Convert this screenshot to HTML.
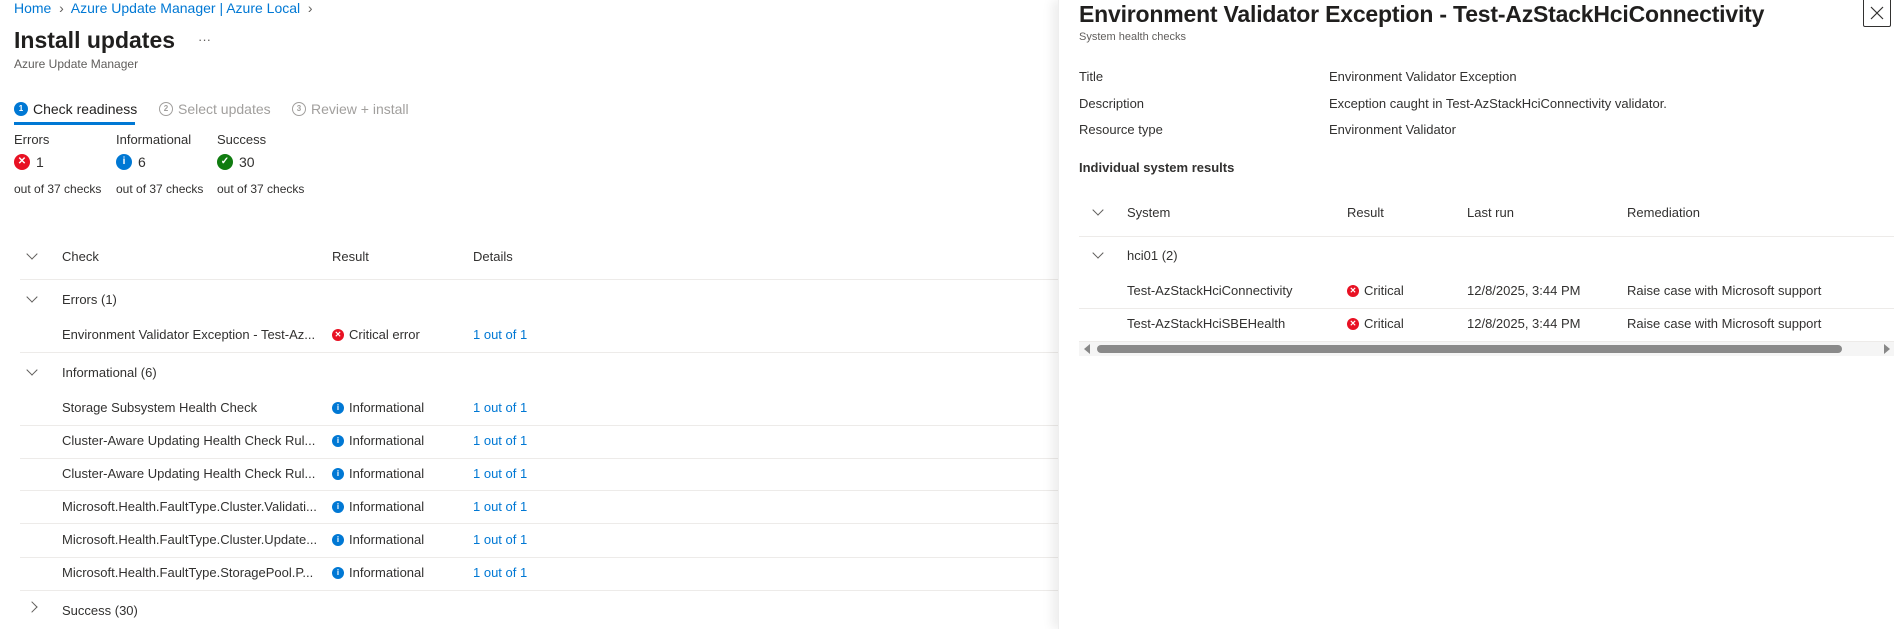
<!DOCTYPE html>
<html><head><meta charset="utf-8"><style>
*{margin:0;padding:0;box-sizing:border-box}
body{width:1894px;height:629px;overflow:hidden;background:#fff;font-family:"Liberation Sans",sans-serif;color:#323130;font-size:13px;position:relative}
.a{position:absolute;white-space:nowrap;line-height:16px;display:flex;align-items:center}
.l{color:#0078d4}
.line{position:absolute;height:1px;background:#edebe9}
.chev{position:absolute;width:8px;height:8px;border-right:1.2px solid #605e5c;border-bottom:1.2px solid #605e5c;transform:rotate(45deg)}
.ic{display:inline-block;flex:none;width:12px;height:12px;border-radius:50%;margin-right:5px;color:#fff;font-size:8px;line-height:12px;text-align:center;font-weight:bold}
.err{background:#e81123}.inf{background:#0078d4}.ok{background:#107c10}
.big{width:16px;height:16px;line-height:16px;font-size:10px;margin-right:6px}
.b{font-weight:bold}
</style></head><body>
<div class="a l" style="left:14px;top:0;font-size:14px">Home &nbsp;<span style="color:#605e5c">›</span>&nbsp; Azure Update Manager | Azure Local &nbsp;<span style="color:#605e5c">›</span></div>
<div class="a" style="left:14px;top:26px;font-size:23px;line-height:28px;font-weight:600;color:#201f1e">Install updates</div>
<div class="a" style="left:198px;top:32px;color:#605e5c">···</div>
<div class="a" style="left:14px;top:56px;font-size:12px;color:#605e5c">Azure Update Manager</div>
<div class="a" style="left:14px;top:101px;font-size:14px;color:#201f1e"><span class="ic inf" style="width:14px;height:14px;line-height:14px">1</span>Check readiness</div>
<div class="a" style="left:159px;top:101px;font-size:14px;color:#a19f9d"><span class="ic" style="border:1px solid #a19f9d;color:#a19f9d;width:14px;height:14px;line-height:12px">2</span>Select updates</div>
<div class="a" style="left:292px;top:101px;font-size:14px;color:#a19f9d"><span class="ic" style="border:1px solid #a19f9d;color:#a19f9d;width:14px;height:14px;line-height:12px">3</span>Review + install</div>
<div style="position:absolute;left:14px;top:122px;width:121px;height:3px;background:#0078d4"></div>
<div class="a" style="left:14px;top:132px">Errors</div>
<div class="a" style="left:116px;top:132px">Informational</div>
<div class="a" style="left:217px;top:132px">Success</div>
<div class="a" style="left:14px;top:154px;font-size:14px"><span class="ic err big">✕</span>1</div>
<div class="a" style="left:116px;top:154px;font-size:14px"><span class="ic inf big">i</span>6</div>
<div class="a" style="left:217px;top:154px;font-size:14px"><span class="ic ok big">✓</span>30</div>
<div class="a" style="left:14px;top:181px;font-size:12px">out of 37 checks</div>
<div class="a" style="left:116px;top:181px;font-size:12px">out of 37 checks</div>
<div class="a" style="left:217px;top:181px;font-size:12px">out of 37 checks</div>

<div class="chev" style="left:28px;top:250px"></div>
<div class="a" style="left:62px;top:249px">Check</div>
<div class="a" style="left:332px;top:249px">Result</div>
<div class="a" style="left:473px;top:249px">Details</div>
<div class="line" style="left:20px;top:279px;width:1040px"></div>
<div class="chev" style="left:28px;top:293px"></div>
<div class="a" style="left:62px;top:292px">Errors (1)</div>
<div class="a" style="left:62px;top:327px">Environment Validator Exception - Test-Az...</div>
<div class="a" style="left:332px;top:327px"><span class="ic err">✕</span>Critical error</div>
<div class="a l" style="left:473px;top:327px">1 out of 1</div>
<div class="line" style="left:20px;top:352px;width:1040px"></div>
<div class="chev" style="left:28px;top:366px"></div>
<div class="a" style="left:62px;top:365px">Informational (6)</div>

<div class="a" style="left:62px;top:400px">Storage Subsystem Health Check</div>
<div class="a" style="left:332px;top:400px"><span class="ic inf">i</span>Informational</div>
<div class="a l" style="left:473px;top:400px">1 out of 1</div>
<div class="line" style="left:20px;top:425px;width:1040px"></div>
<div class="a" style="left:62px;top:433px">Cluster-Aware Updating Health Check Rul...</div>
<div class="a" style="left:332px;top:433px"><span class="ic inf">i</span>Informational</div>
<div class="a l" style="left:473px;top:433px">1 out of 1</div>
<div class="line" style="left:20px;top:458px;width:1040px"></div>
<div class="a" style="left:62px;top:466px">Cluster-Aware Updating Health Check Rul...</div>
<div class="a" style="left:332px;top:466px"><span class="ic inf">i</span>Informational</div>
<div class="a l" style="left:473px;top:466px">1 out of 1</div>
<div class="line" style="left:20px;top:490px;width:1040px"></div>
<div class="a" style="left:62px;top:499px">Microsoft.Health.FaultType.Cluster.Validati...</div>
<div class="a" style="left:332px;top:499px"><span class="ic inf">i</span>Informational</div>
<div class="a l" style="left:473px;top:499px">1 out of 1</div>
<div class="line" style="left:20px;top:523px;width:1040px"></div>
<div class="a" style="left:62px;top:532px">Microsoft.Health.FaultType.Cluster.Update...</div>
<div class="a" style="left:332px;top:532px"><span class="ic inf">i</span>Informational</div>
<div class="a l" style="left:473px;top:532px">1 out of 1</div>
<div class="line" style="left:20px;top:557px;width:1040px"></div>
<div class="a" style="left:62px;top:565px">Microsoft.Health.FaultType.StoragePool.P...</div>
<div class="a" style="left:332px;top:565px"><span class="ic inf">i</span>Informational</div>
<div class="a l" style="left:473px;top:565px">1 out of 1</div>
<div class="line" style="left:20px;top:590px;width:1040px"></div>
<div style="position:absolute;left:28px;top:603px;width:8px;height:8px;border-right:1.2px solid #605e5c;border-bottom:1.2px solid #605e5c;transform:rotate(-45deg)"></div>
<div class="a" style="left:62px;top:603px">Success (30)</div>

<div style="position:absolute;left:1058px;top:0;width:836px;height:629px;background:#fff;box-shadow:-6px 0 10px rgba(0,0,0,0.07);border-left:1px solid #eee"></div>
<div class="a" style="left:1079px;top:0px;font-size:23px;line-height:28px;font-weight:600;color:#201f1e;letter-spacing:-0.2px">Environment Validator Exception - Test-AzStackHciConnectivity</div>
<div style="position:absolute;left:1863px;top:-2px;width:28px;height:29px;border:1px solid #323130;border-radius:2px"></div>
<svg style="position:absolute;left:1869px;top:5px" width="16" height="16" viewBox="0 0 16 16"><path d="M2 2L14 14M14 2L2 14" stroke="#323130" stroke-width="1.2"/></svg>
<div class="a" style="left:1079px;top:29px;font-size:11px;color:#605e5c">System health checks</div>
<div class="a" style="left:1079px;top:69px">Title</div>
<div class="a" style="left:1329px;top:69px">Environment Validator Exception</div>
<div class="a" style="left:1079px;top:96px">Description</div>
<div class="a" style="left:1329px;top:96px">Exception caught in Test-AzStackHciConnectivity validator.</div>
<div class="a" style="left:1079px;top:122px">Resource type</div>
<div class="a" style="left:1329px;top:122px">Environment Validator</div>
<div class="a b" style="left:1079px;top:160px">Individual system results</div>
<div class="chev" style="left:1094px;top:206px"></div>
<div class="a" style="left:1127px;top:205px">System</div>
<div class="a" style="left:1347px;top:205px">Result</div>
<div class="a" style="left:1467px;top:205px">Last run</div>
<div class="a" style="left:1627px;top:205px">Remediation</div>
<div class="line" style="left:1079px;top:236px;width:815px"></div>
<div class="chev" style="left:1094px;top:249px"></div>
<div class="a" style="left:1127px;top:248px">hci01 (2)</div>
<div class="a" style="left:1127px;top:283px">Test-AzStackHciConnectivity</div>
<div class="a" style="left:1347px;top:283px"><span class="ic err">✕</span>Critical</div>
<div class="a" style="left:1467px;top:283px">12/8/2025, 3:44 PM</div>
<div class="a" style="left:1627px;top:283px">Raise case with Microsoft support</div>
<div class="line" style="left:1079px;top:308px;width:815px"></div>
<div class="a" style="left:1127px;top:316px">Test-AzStackHciSBEHealth</div>
<div class="a" style="left:1347px;top:316px"><span class="ic err">✕</span>Critical</div>
<div class="a" style="left:1467px;top:316px">12/8/2025, 3:44 PM</div>
<div class="a" style="left:1627px;top:316px">Raise case with Microsoft support</div>
<div class="line" style="left:1079px;top:341px;width:815px"></div>
<div style="position:absolute;left:1079px;top:342px;width:815px;height:14px;background:#f5f5f5"></div>
<div style="position:absolute;left:1084px;top:344px;width:0;height:0;border-top:5px solid transparent;border-bottom:5px solid transparent;border-right:6px solid #888"></div>
<div style="position:absolute;left:1097px;top:345px;width:745px;height:8px;border-radius:4px;background:#8a8a8a"></div>
<div style="position:absolute;left:1884px;top:344px;width:0;height:0;border-top:5px solid transparent;border-bottom:5px solid transparent;border-left:6px solid #888"></div>
</body></html>
